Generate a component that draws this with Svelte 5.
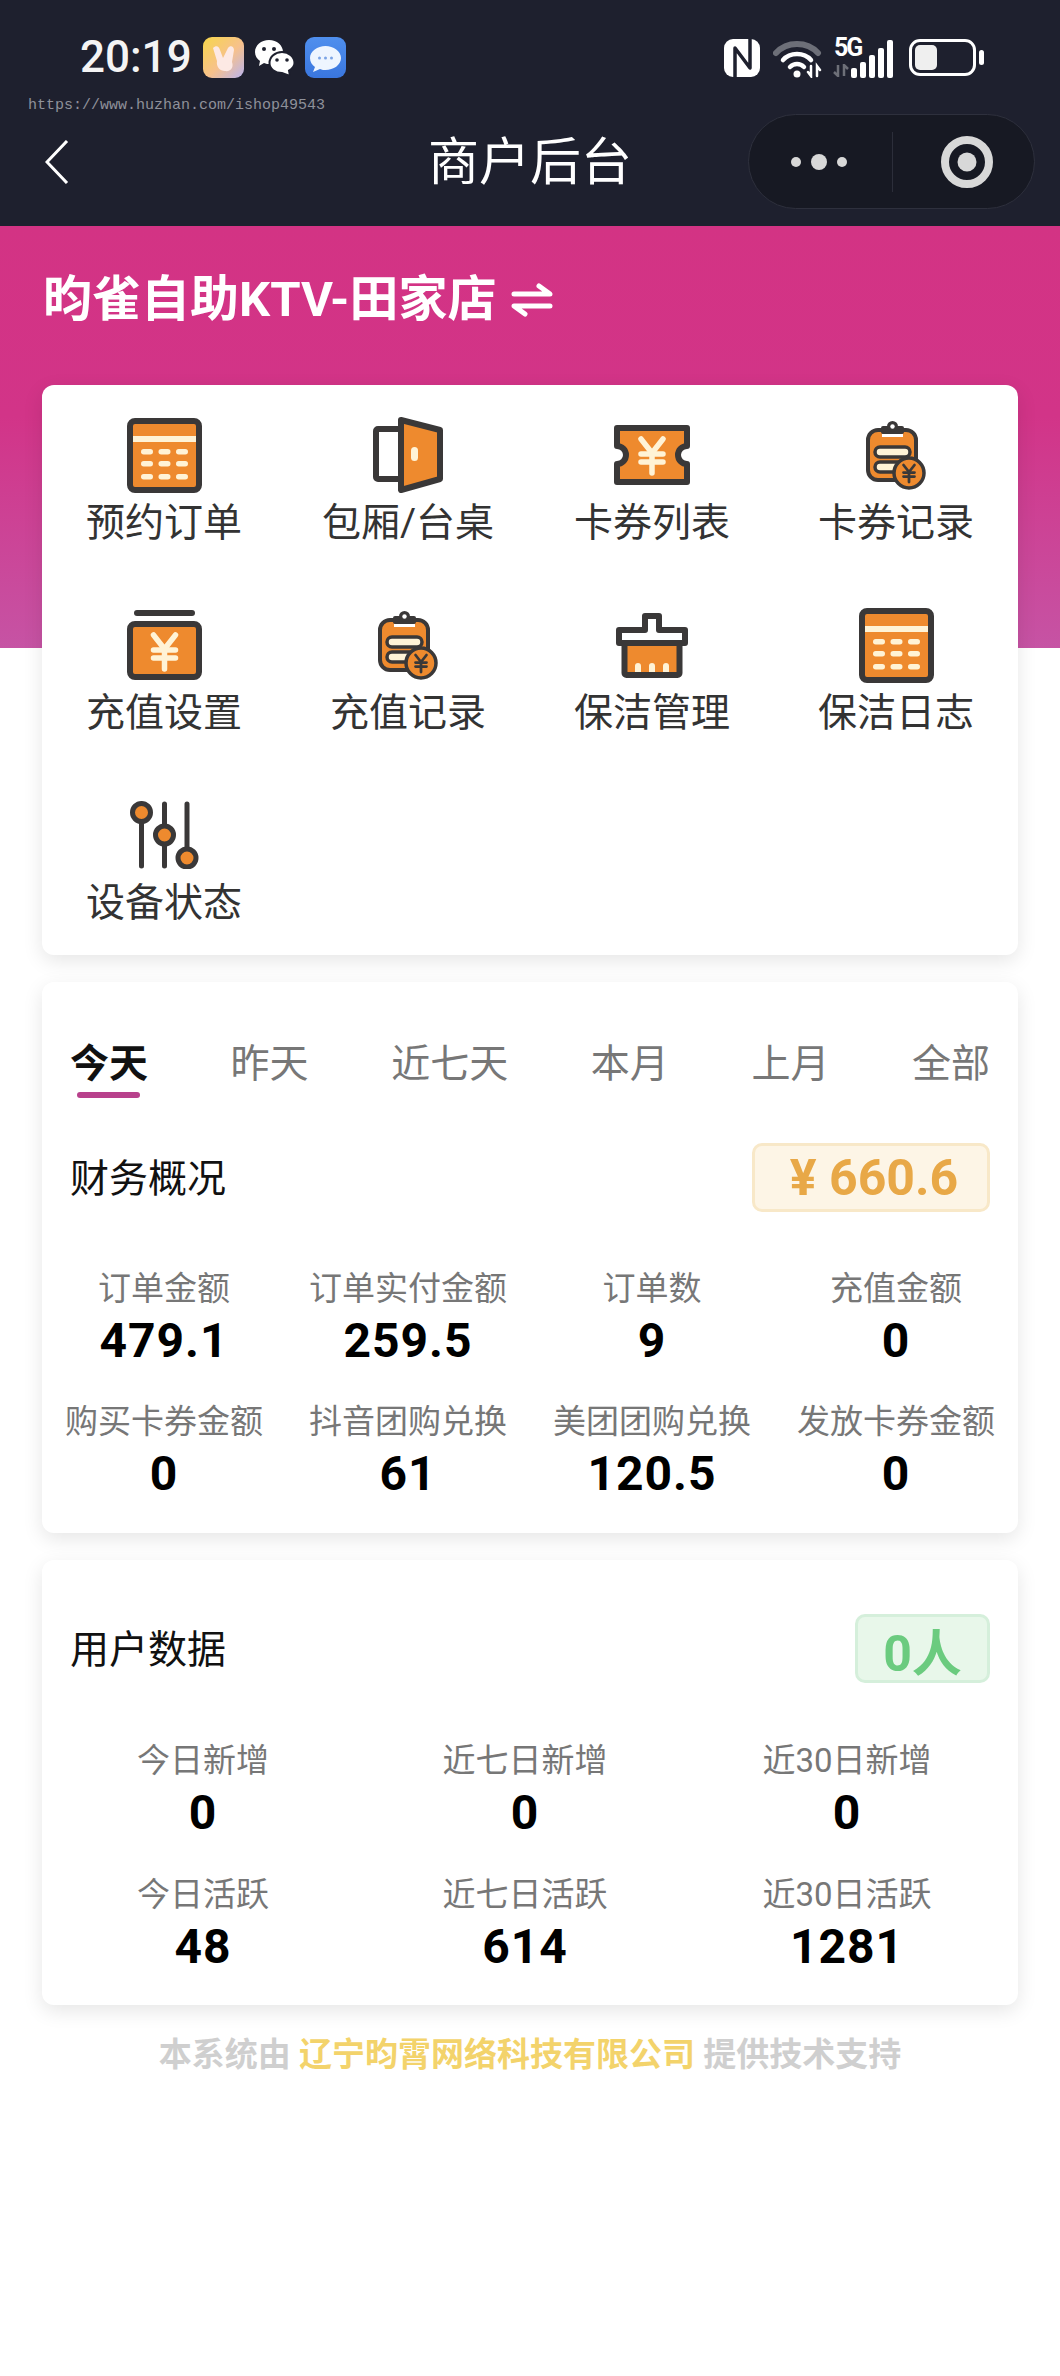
<script>
  const menu = [
    { label: "预约订单", icon: "calendar" },
    { label: "包厢/台桌", icon: "door" },
    { label: "卡券列表", icon: "voucher" },
    { label: "卡券记录", icon: "clip" },
    { label: "充值设置", icon: "wallet" },
    { label: "充值记录", icon: "clip" },
    { label: "保洁管理", icon: "brush" },
    { label: "保洁日志", icon: "calendar" },
    { label: "设备状态", icon: "sliders" },
  ];
  const tabs = ["今天", "昨天", "近七天", "本月", "上月", "全部"];
  const finance = [
    ["订单金额", "479.1"],
    ["订单实付金额", "259.5"],
    ["订单数", "9"],
    ["充值金额", "0"],
    ["购买卡券金额", "0"],
    ["抖音团购兑换", "61"],
    ["美团团购兑换", "120.5"],
    ["发放卡券金额", "0"],
  ];
  const users = [
    ["今日新增", "0"],
    ["近七日新增", "0"],
    ["近30日新增", "0"],
    ["今日活跃", "48"],
    ["近七日活跃", "614"],
    ["近30日活跃", "1281"],
  ];
  const cal = [31, 43, 56];
  const calX = [14, 31.5, 49];
  const orange = "#ee8a2e";
  const dark = "#3a3838";
  const cream = "#fff3d6";
</script>

{#snippet yen(cx, top, scale, color)}
  <g transform="translate({cx} {top}) scale({scale})" fill="none" stroke={color} stroke-width="5.5" stroke-linecap="round" stroke-linejoin="round">
    <path d="M-11 0 L0 14 L11 0" />
    <path d="M-11 15 H11 M-11 23 H11 M0 14 V34" />
  </g>
{/snippet}

{#snippet icon(name)}
  {#if name === "calendar"}
    <svg width="75" height="75" viewBox="0 0 75 75">
      <rect x="3" y="3" width="69" height="69" rx="5" fill={orange} stroke={dark} stroke-width="6" />
      <rect x="6" y="18" width="63" height="6" fill={cream} />
      {#each cal as y}
        {#each calX as x}
          <rect {x} {y} width="12" height="5.5" rx="2.7" fill={cream} />
        {/each}
      {/each}
    </svg>
  {:else if name === "door"}
    <svg width="70" height="76" viewBox="0 0 70 76">
      <rect x="3" y="12" width="30" height="50" rx="2" fill="#fff" stroke={dark} stroke-width="6" stroke-linejoin="round" />
      <path d="M28 3 L67 13 V62 L28 73 Z" fill={orange} stroke={dark} stroke-width="6" stroke-linejoin="round" />
      <rect x="38" y="30" width="7" height="14" rx="3.5" fill={cream} />
    </svg>
  {:else if name === "voucher"}
    <svg width="76" height="60" viewBox="0 0 76 60">
      <path d="M3 3 H73 V21 A9 9 0 0 0 73 39 V57 H3 V39 A9 9 0 0 0 3 21 Z" fill={orange} stroke={dark} stroke-width="6" stroke-linejoin="round" />
      {@render yen(38, 14, 1, cream)}
    </svg>
  {:else if name === "clip"}
    <svg width="60" height="69" viewBox="0 0 60 69">
      <rect x="2" y="9" width="48" height="50" rx="10" fill={orange} stroke={dark} stroke-width="4" />
      <rect x="15" y="5" width="23" height="8" rx="2" fill={dark} />
      <circle cx="26.5" cy="5.5" r="5.5" fill={dark} />
      <circle cx="26.5" cy="5.5" r="2.2" fill="#fff" />
      <rect x="16" y="13" width="21" height="3" fill="#fff" />
      <rect x="9" y="26" width="35" height="10" rx="5" fill={cream} stroke={dark} stroke-width="3.5" />
      <rect x="9" y="41" width="30" height="10" rx="5" fill={cream} stroke={dark} stroke-width="3.5" />
      <circle cx="43" cy="52" r="15" fill={orange} stroke={dark} stroke-width="3.5" />
      {@render yen(43, 44, 0.5, dark)}
    </svg>
  {:else if name === "wallet"}
    <svg width="75" height="70" viewBox="0 0 75 70">
      <rect x="7" y="0" width="61" height="6" rx="3" fill={dark} />
      <rect x="3" y="14" width="69" height="53" rx="5" fill={orange} stroke={dark} stroke-width="6" />
      {@render yen(37.5, 25, 1, cream)}
    </svg>
  {:else if name === "brush"}
    <svg width="72" height="65" viewBox="0 0 72 65">
      <rect x="8.5" y="28" width="55" height="34" rx="2" fill={orange} stroke={dark} stroke-width="6" />
      <path d="M19 59 V53 a3 3 0 0 1 6 0 V59 Z M33 59 V53 a3 3 0 0 1 6 0 V59 Z M47 59 V53 a3 3 0 0 1 6 0 V59 Z" fill={cream} />
      <path d="M29 3 H43 V17 H69 V30 H3 V17 H29 Z" fill="#fff" stroke={dark} stroke-width="6" stroke-linejoin="round" />
    </svg>
  {:else if name === "sliders"}
    <svg width="69" height="68" viewBox="0 0 69 68" fill="none" stroke={dark} stroke-linecap="round">
      <path d="M11.5 3 V65 M34.5 3 V65 M57 3 V65" stroke-width="5" />
      <circle cx="11.5" cy="11.5" r="9" fill={orange} stroke-width="5" />
      <circle cx="34.5" cy="34" r="9" fill={orange} stroke-width="5" />
      <circle cx="57" cy="57" r="9" fill={orange} stroke-width="5" />
    </svg>
  {/if}
{/snippet}

<div class="page">
  <header class="top">
    <div class="status">
      <span class="time">20:19</span>
      <svg class="app" width="41" height="41" viewBox="0 0 41 41">
        <defs>
          <linearGradient id="appg" x1="0" y1="0" x2="1" y2="1">
            <stop offset="0" stop-color="#f7d64a" />
            <stop offset="0.55" stop-color="#f7c18c" />
            <stop offset="1" stop-color="#b9b4f0" />
          </linearGradient>
          <linearGradient id="blueg" x1="0" y1="0" x2="0" y2="1">
            <stop offset="0" stop-color="#4f8fee" />
            <stop offset="1" stop-color="#3a76de" />
          </linearGradient>
        </defs>
        <rect width="41" height="41" rx="9" fill="url(#appg)" />
        <path d="M10 11 C13 8 16 9 17 13 L20 21 L25 11 C27 8 31 9 31 13 L29 25 C31 30 28 35 22 34 C17 34 13 30 14 24 Z" fill="#fde9e4" />
      </svg>
      <svg class="app" width="41" height="37" viewBox="0 0 41 37">
        <path d="M15 1 C7 1 1 6.500 1 13 C1 17 3 20 6 22 L5 27 L10 24 C12 25 14 25 16 25 C23 25 29 20 29 13 C29 6.500 23 1 15 1 Z" fill="#fff" />
        <circle cx="10" cy="10" r="2" fill="#1e202e" />
        <circle cx="20" cy="10" r="2" fill="#1e202e" />
        <path d="M28 13 C21 13 15.500 18 15.500 24 C15.500 30 21 34 28 34 L36 37 L35 31.500 C38.500 29.500 40.500 27 40.500 24 C40.500 18 35 13 28 13 Z" fill="#fff" stroke="#1e202e" stroke-width="2" />
        <circle cx="23" cy="21" r="1.800" fill="#1e202e" />
        <circle cx="33" cy="21" r="1.800" fill="#1e202e" />
      </svg>
      <svg class="app" width="41" height="41" viewBox="0 0 41 41">
        <rect width="41" height="41" rx="9" fill="url(#blueg)" />
        <path d="M20.500 9 C12.500 9 5 14 5 21 C5 25 7 28 10 30 L8 35 L15 32 C17 33 19 33 20.500 33 C28.500 33 36 28 36 21 C36 14 28.500 9 20.500 9 Z" fill="#eef5ff" />
        <circle cx="14.500" cy="21" r="1.500" fill="#7ba4e6" />
        <circle cx="20.500" cy="21" r="1.500" fill="#7ba4e6" />
        <circle cx="26.500" cy="21" r="1.500" fill="#7ba4e6" />
      </svg>
      <div class="status-right">
        <svg width="38" height="38" viewBox="0 0 38 38" fill="none">
          <rect x="1" y="0" width="36" height="38" rx="9" fill="#fff" />
          <path d="M12 38 V9 L27 29 V0" stroke="#1e202e" stroke-width="3.500" stroke-linejoin="round" />
        </svg>
        <svg class="wifi" width="50" height="40" viewBox="0 0 50 40" fill="none" stroke-linecap="round">
          <path d="M3 15 C14 3 34 3 45 15" stroke="#6d6f78" stroke-width="6" />
          <path d="M10 22 C17 14 31 14 38 22" stroke="#fff" stroke-width="4.500" />
          <path d="M17 29 C21 25 27 25 31 29" stroke="#fff" stroke-width="4.500" />
          <circle cx="24" cy="36" r="3.500" fill="#fff" />
          <path d="M38 28 V38 L35 34 M44 38 V28 L47 32" stroke="#fff" stroke-width="2.500" />
        </svg>
        <div class="cell">
          <span class="five">5G</span>
          <svg class="arrows" width="16" height="13" viewBox="0 0 16 13" fill="none" stroke="#6d6f78" stroke-width="2.500">
            <path d="M5 1 V12 L1 8 M11 12 V1 L15 5" />
          </svg>
          <div class="bars">
            <i style="height: 10px"></i>
            <i style="height: 16px"></i>
            <i style="height: 23px"></i>
            <i style="height: 30px"></i>
            <i style="height: 38px"></i>
          </div>
        </div>
        <div class="battery"><i></i></div>
        <b class="nub"></b>
      </div>
    </div>
    <div class="mark">https://www.huzhan.com/ishop49543</div>
    <nav class="nav">
      <svg class="back" width="24" height="44" viewBox="0 0 24 44" fill="none" stroke="#fff" stroke-width="3">
        <path d="M22 1 L2 22 L22 43" />
      </svg>
      <h1>商户后台</h1>
      <div class="capsule">
        <svg width="56" height="20" viewBox="0 0 56 20" fill="#d8d8d8">
          <circle cx="5" cy="10" r="5" />
          <circle cx="28" cy="10" r="8" />
          <circle cx="51" cy="10" r="5" />
        </svg>
        <span class="sep"></span>
        <svg width="54" height="54" viewBox="0 0 54 54">
          <circle cx="27" cy="27" r="22" fill="none" stroke="#d8d8d8" stroke-width="8" />
          <circle cx="27" cy="27" r="9.500" fill="#d8d8d8" />
        </svg>
      </div>
    </nav>
  </header>

  <section class="hero">
    <h2>
      <span>昀雀自助KTV-田家店</span>
      <svg width="42" height="34" viewBox="0 0 42 34" fill="none" stroke="#fff" stroke-width="5" stroke-linecap="round" stroke-linejoin="round">
        <path d="M3 11 H39 L28 3" />
        <path d="M39 23 H3 L14 31" />
      </svg>
    </h2>
  </section>

  <main class="content">
    <div class="card menu">
      {#each menu as item}
        <div class="menu-item">
          <div class="icon-box">{@render icon(item.icon)}</div>
          <span>{item.label}</span>
        </div>
      {/each}
    </div>

    <div class="card finance">
      <div class="tabs">
        {#each tabs as tab, i}
          <span class="tab" class:active={i === 0}>{tab}</span>
        {/each}
      </div>
      <div class="head">
        <span class="head-title">财务概况</span>
        <span class="badge gold">¥ 660.6</span>
      </div>
      <div class="stats four">
        {#each finance as [label, value]}
          <div class="stat">
            <span class="stat-label">{label}</span>
            <strong>{value}</strong>
          </div>
        {/each}
      </div>
    </div>

    <div class="card users">
      <div class="head">
        <span class="head-title">用户数据</span>
        <span class="badge green">0人</span>
      </div>
      <div class="stats three">
        {#each users as [label, value]}
          <div class="stat">
            <span class="stat-label">{label}</span>
            <strong>{value}</strong>
          </div>
        {/each}
      </div>
    </div>

    <p class="foot">本系统由 <em>辽宁昀霄网络科技有限公司</em> 提供技术支持</p>
  </main>
</div>

<style>
  :global(body) {
    background: #fff;
  }

  .page {
    width: 1060px;
    height: 2376px;
    overflow: hidden;
    font-family: Roboto, "Noto Sans CJK SC", sans-serif;
    color: #333;
  }

  .top {
    height: 226px;
    box-sizing: border-box;
    padding-top: 37px;
    background: #1e202e;
  }

  .status {
    display: flex;
    align-items: center;
    height: 41px;
    padding: 0 76px 0 80px;
    color: #fff;
  }

  .time {
    width: 123px;
    font-size: 44px;
    font-weight: 500;
    line-height: 41px;
    color: #f4f4f4;
  }

  .app {
    margin-right: 10px;
  }

  .status-right {
    display: flex;
    align-items: center;
    margin-left: auto;
  }

  .wifi {
    margin-left: 12px;
  }

  .cell {
    position: relative;
    width: 62px;
    height: 40px;
    margin-left: 10px;
  }

  .five {
    position: absolute;
    left: 1px;
    top: -1px;
    font-size: 25px;
    line-height: 22px;
    font-weight: 700;
    letter-spacing: -2px;
  }

  .arrows {
    position: absolute;
    left: 0;
    bottom: 1px;
  }

  .bars {
    position: absolute;
    right: 2px;
    bottom: 0;
    display: flex;
    align-items: flex-end;
    gap: 3px;
  }

  .bars i {
    width: 6px;
    border-radius: 2px;
    background: #fff;
  }

  .battery {
    width: 67px;
    height: 37px;
    box-sizing: border-box;
    margin-left: 14px;
    padding: 3px;
    border: 3px solid #fff;
    border-radius: 11px;
  }

  .battery i {
    display: block;
    width: 22px;
    height: 100%;
    border-radius: 5px;
    background: #efefef;
  }

  .nub {
    width: 5px;
    height: 15px;
    margin-left: 3px;
    border-radius: 3px;
    background: #fff;
  }

  .mark {
    margin: 19px 0 0 28px;
    font-family: "Liberation Mono", monospace;
    font-size: 15px;
    line-height: 17px;
    color: #8f919a;
  }

  .nav {
    display: grid;
    grid-template-columns: 1fr auto 1fr;
    align-items: center;
    height: 95px;
    padding: 0 25px;
  }

  .back {
    margin-left: 20px;
  }

  h1 {
    margin: 3px 0 0;
    font-size: 51px;
    font-weight: 400;
    line-height: 92px;
    color: #fff;
  }

  .capsule {
    justify-self: end;
    display: flex;
    align-items: center;
    width: 287px;
    height: 95px;
    box-sizing: border-box;
    padding-left: 42px;
    border: 1px solid #2e303d;
    border-radius: 48px;
    background: #171923;
  }

  .sep {
    width: 1px;
    height: 60px;
    margin: 0 47px 0 45px;
    background: #2c2e3a;
  }

  .hero {
    height: 422px;
    box-sizing: border-box;
    padding: 44px 0 0 43px;
    background: linear-gradient(180deg, #d33384 0%, #d23488 45%, #c653a4 100%);
  }

  h2 {
    display: flex;
    align-items: center;
    gap: 15px;
    margin: 0;
    font-size: 49px;
    font-weight: 700;
    line-height: 60px;
    color: #fff;
  }

  .content {
    margin-top: -263px;
    padding: 0 42px;
    display: flex;
    flex-direction: column;
    gap: 27px;
  }

  .card {
    position: relative;
    border-radius: 12px;
    background: #fff;
    box-shadow: 0 6px 20px rgba(0, 0, 0, 0.1);
  }

  .menu {
    display: grid;
    grid-template-columns: repeat(4, 1fr);
    row-gap: 56px;
    padding: 32px 0 24px;
  }

  .menu-item {
    display: flex;
    flex-direction: column;
    align-items: center;
    font-size: 39px;
    line-height: 58px;
    color: #333;
  }

  .menu-item span {
    margin-top: 1px;
    margin-bottom: -1px;
  }

  .icon-box {
    display: flex;
    align-items: center;
    justify-content: center;
    height: 76px;
  }

  .finance {
    padding: 54px 28px 29px;
  }

  .tabs {
    display: flex;
    justify-content: space-between;
    font-size: 39px;
    line-height: 54px;
    color: #777;
  }

  .tab {
    position: relative;
    top: 1px;
  }

  .tab.active {
    font-weight: 700;
    color: #111;
  }

  .tab.active::after {
    content: "";
    position: absolute;
    left: 7px;
    right: 8px;
    bottom: -7px;
    height: 6px;
    border-radius: 3px;
    background: #b8418c;
  }

  .head {
    display: flex;
    align-items: center;
    justify-content: space-between;
    font-size: 39px;
    color: #111;
  }

  .head-title {
    margin-bottom: 5px;
  }

  .finance .head {
    margin-top: 53px;
  }

  .badge {
    display: flex;
    align-items: center;
    justify-content: center;
    height: 69px;
    box-sizing: border-box;
    font-size: 50px;
    font-weight: 700;
    border-radius: 10px;
  }

  .gold {
    width: 238px;
    padding-left: 6px;
    border: 3px solid #f8e8c8;
    background: #fdf5e6;
    color: #e8a847;
  }

  .green {
    width: 135px;
    border: 3px solid #d5efdb;
    background: #e8f7ea;
    color: #6bcb7f;
  }

  .stats {
    display: grid;
    row-gap: 28px;
    margin-top: 54px;
  }

  .four {
    grid-template-columns: repeat(4, 1fr);
    margin-inline: -28px;
  }

  .three {
    grid-template-columns: repeat(3, 1fr);
    margin-top: 55px;
    margin-right: 10px;
    row-gap: 29px;
  }

  .stat {
    display: flex;
    flex-direction: column;
    align-items: center;
    white-space: nowrap;
  }

  .stat-label {
    font-size: 33px;
    line-height: 46px;
    color: #777;
  }

  strong {
    margin-top: -1px;
    font-size: 48px;
    font-weight: 700;
    line-height: 60px;
    letter-spacing: 1px;
    color: #000;
  }

  .users {
    padding: 54px 0 28px;
  }

  .users .head {
    padding: 0 28px;
  }

  .foot {
    margin: 0;
    text-align: center;
    font-size: 33px;
    font-weight: 700;
    line-height: 46px;
    color: #cfcfcf;
  }

  .foot em {
    font-style: normal;
    color: #f3d36b;
  }
</style>
